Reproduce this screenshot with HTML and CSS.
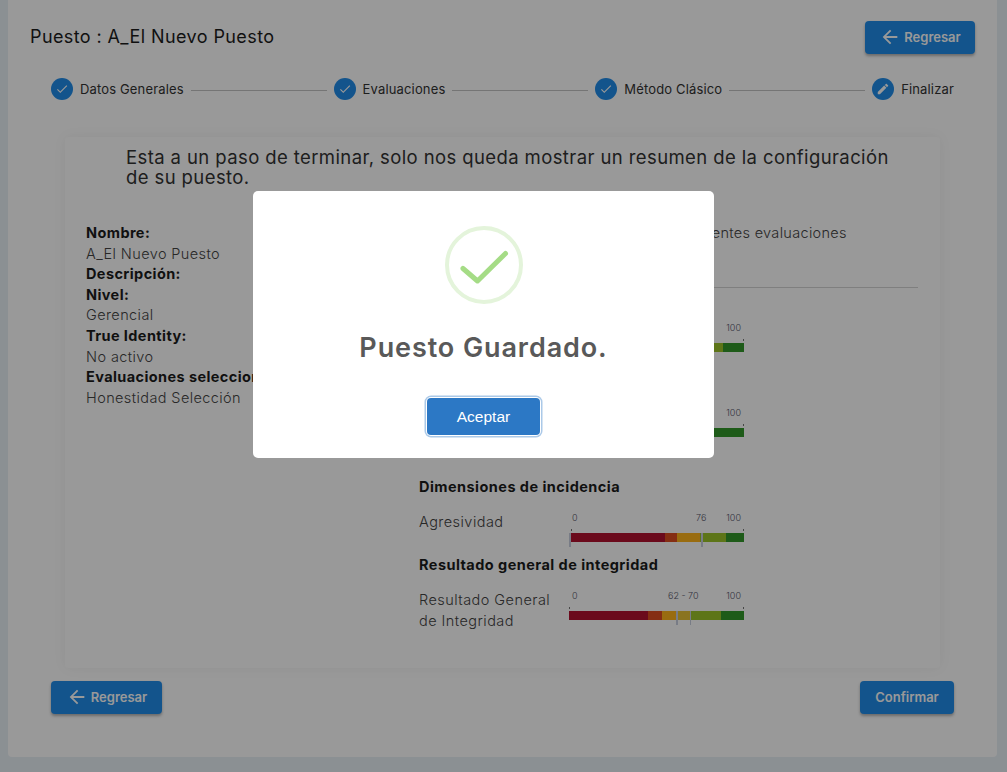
FILE: index.html

```html
<!DOCTYPE html>
<html lang="es">
<head>
  <meta charset="UTF-8" />
  <title>Puesto</title>
  <link rel="stylesheet" href="styles.css">
</head>
<body>
  <div class="panel">
    <div class="header">
      <h1>Puesto : A_El Nuevo Puesto</h1>
      <button class="btn btn-back">
        <svg viewBox="0 0 24 24"><path d="M20 11H7.83l5.59-5.59L12 4l-8 8 8 8 1.41-1.41L7.83 13H20v-2z"/></svg>
        Regresar
      </button>
    </div>

    <div class="steps">
      <span class="step-icon"><svg viewBox="0 0 24 24"><path d="M9 16.17L4.83 12l-1.42 1.41L9 19 21 7l-1.41-1.41z"/></svg></span>
      <span class="step-label">Datos Generales</span>
      <span class="step-line"></span>
      <span class="step-icon"><svg viewBox="0 0 24 24"><path d="M9 16.17L4.83 12l-1.42 1.41L9 19 21 7l-1.41-1.41z"/></svg></span>
      <span class="step-label">Evaluaciones</span>
      <span class="step-line"></span>
      <span class="step-icon"><svg viewBox="0 0 24 24"><path d="M9 16.17L4.83 12l-1.42 1.41L9 19 21 7l-1.41-1.41z"/></svg></span>
      <span class="step-label">Método Clásico</span>
      <span class="step-line"></span>
      <span class="step-icon"><svg viewBox="0 0 24 24"><path d="M20.71 7.04c.39-.39.39-1.04 0-1.41l-2.34-2.34c-.37-.39-1.02-.39-1.41 0l-1.84 1.83 3.75 3.75M3 17.25V21h3.75L17.81 9.93l-3.75-3.75L3 17.25z"/></svg></span>
      <span class="step-label">Finalizar</span>
    </div>

    <div class="card">
      <p class="intro">Esta a un paso de terminar, solo nos queda mostrar un resumen de la configuración de su puesto.</p>
      <div class="columns">
        <div class="summary">
          <b>Nombre:</b>
          <span>A_El Nuevo Puesto</span>
          <b>Descripción:</b>
          <b>Nivel:</b>
          <span>Gerencial</span>
          <b>True Identity:</b>
          <span>No activo</span>
          <b>Evaluaciones seleccionadas:</b>
          <span>Honestidad Selección</span>
        </div>
        <div class="results">
          <div class="results-title">Su puesto será medido mediante las siguientes evaluaciones</div>
          <div class="results-name"></div>

          <div class="row row-first">
            <div class="row-label"></div>
            <div class="gauge">
              <div class="ticks ticks-end"><span>100</span></div>
              <div class="bar">
                <i class="c1 w52"></i><i class="c2 w8"></i><i class="c3 w14"></i><i class="c5 w14"></i><i class="c6 w12"></i>
              </div>
            </div>
          </div>

          <div class="row row-second">
            <div class="row-label"></div>
            <div class="gauge">
              <div class="ticks ticks-end"><span>100</span></div>
              <div class="bar">
                <i class="c1 w52"></i><i class="c2 w8"></i><i class="c3 w14"></i><i class="c5 w8"></i><i class="c6 w18"></i>
              </div>
            </div>
          </div>

          <h3>Dimensiones de incidencia</h3>
          <div class="row">
            <div class="row-label">Agresividad</div>
            <div class="gauge">
              <div class="ticks"><span>0</span><span class="tick-mid tick-76">76</span><span>100</span></div>
              <div class="bar bar-short">
                <i class="c1 w54"></i><i class="c2 w7"></i><i class="c3 w13"></i><i class="c5 w15"></i><i class="c6 w11"></i>
                <em class="mark mark-0"></em><em class="mark mark-76"></em>
              </div>
            </div>
          </div>

          <h3>Resultado general de integridad</h3>
          <div class="row">
            <div class="row-label">Resultado General<br>de Integridad</div>
            <div class="gauge">
              <div class="ticks"><span>0</span><span class="tick-mid tick-range">62 - 70</span><span>100</span></div>
              <div class="bar">
                <i class="c1 w45"></i><i class="c2 w8"></i><i class="c3 w8"></i><i class="c4 w9"></i><i class="c5 w17"></i><i class="c6 w13"></i>
                <em class="mark mark-62"></em><em class="mark mark-70"></em>
              </div>
            </div>
          </div>
        </div>
      </div>
    </div>

    <div class="footer">
      <button class="btn btn-back btn-back-footer">
        <svg viewBox="0 0 24 24"><path d="M20 11H7.83l5.59-5.59L12 4l-8 8 8 8 1.41-1.41L7.83 13H20v-2z"/></svg>
        Regresar
      </button>
      <button class="btn btn-confirm">Confirmar</button>
    </div>
  </div>

  <div class="overlay">
    <div class="modal">
      <svg class="modal-icon" viewBox="0 0 78 78">
        <circle cx="39" cy="39" r="37" fill="none" stroke="#e4f4db" stroke-width="4"/>
        <path d="M18 42.5 L32.5 55 L60.5 27.5" fill="none" stroke="#a5dc86" stroke-width="5" stroke-linecap="round" stroke-linejoin="round"/>
      </svg>
      <h2>Puesto Guardado.</h2>
      <button class="modal-ok">Aceptar</button>
    </div>
  </div>
</body>
</html>
```

FILE: styles.css

```css
* {
  box-sizing: border-box;
}
html, body {
  height: 100%;
}
body {
  font-family: Inter, 'Open Sans', sans-serif;
  background: #e8f0f6;
  color: #222;
  margin: 0;
  padding: 0 10px 15px 8px;
  overflow: hidden;
}
.panel {
  height: 757px;
  background: #fff;
  border-radius: 0 0 4px 4px;
}
.header {
  display: flex;
  justify-content: space-between;
  align-items: center;
  padding: 21px 22px 0;
}
h1 {
  margin: 0 0 2px;
  font-size: 18px;
  font-weight: 400;
  letter-spacing: 0.4px;
  color: #1c1c1c;
}
.btn {
  display: flex;
  align-items: center;
  justify-content: center;
  height: 33px;
  padding: 0 0 2px;
  border: none;
  border-radius: 4px;
  background: #208ce9;
  color: #fff;
  font-family: inherit;
  font-size: 13px;
  font-weight: 600;
  box-shadow: 0 2px 3px rgba(0, 0, 0, 0.3);
}
.btn svg {
  width: 22px;
  height: 22px;
  margin-right: 3px;
  fill: #fff;
}
.btn-back {
  width: 110px;
}
.btn-back-footer {
  width: 111px;
}
.btn-confirm {
  width: 94px;
}
.steps {
  display: flex;
  align-items: center;
  height: 22px;
  padding: 0 43px;
  margin-top: 24px;
}
.step-icon {
  display: flex;
  align-items: center;
  justify-content: center;
  flex: none;
  width: 22px;
  height: 22px;
  border-radius: 50%;
  background: #208ce9;
}
.step-icon svg {
  width: 14px;
  height: 14px;
  fill: #fff;
}
.step-label {
  margin-left: 7px;
  font-size: 13px;
  letter-spacing: 0.15px;
  color: #333;
  white-space: nowrap;
}
.step-line {
  flex: 1;
  height: 1px;
  margin: 2px 7px 0;
  background: #c4c4c4;
}
.card {
  height: 531px;
  margin: 37px 57px 0;
  padding: 10px 22px 0 21px;
  box-shadow: 0 0 14px rgba(0, 0, 0, 0.05);
  border-radius: 4px;
}
.intro {
  width: 775px;
  margin: 0 0 0 40px;
  font-size: 18.5px;
  line-height: 20px;
  letter-spacing: 0.4px;
  color: #333;
}
.columns {
  display: grid;
  grid-template-columns: 333px 1fr;
  margin-top: 36px;
}
.summary {
  display: flex;
  flex-direction: column;
  font-size: 14.5px;
  line-height: 20.6px;
  letter-spacing: 0.4px;
}
.summary b {
  font-weight: 700;
  color: #1c1c1c;
  white-space: nowrap;
}
.summary span {
  font-weight: 300;
  color: #444;
}
.results {
  font-size: 14.5px;
  font-weight: 300;
  letter-spacing: 0.45px;
  color: #444;
}
.results-title {
  line-height: 20.6px;
  letter-spacing: 0.31px;
}
.results-name {
  height: 44px;
  border-bottom: 1px solid #d4d4d4;
}
h3 {
  margin: 0;
  font-size: 14.5px;
  line-height: 20px;
  font-weight: 700;
  color: #1c1c1c;
}
.row {
  display: grid;
  grid-template-columns: 150px 175px;
  margin-top: 14px;
  line-height: 21px;
}
.row-first {
  margin-top: 33px;
  height: 85px;
}
.row-second {
  height: 58px;
  margin-top: 0;
}
.row + h3 {
  margin-top: 13px;
}
.ticks {
  display: flex;
  justify-content: space-between;
  height: 22px;
  padding: 1px 3px 0;
  font-size: 9px;
  line-height: 11px;
  letter-spacing: 0;
  color: #55556a;
  position: relative;
}
.ticks-end {
  justify-content: flex-end;
}
.tick-mid {
  position: absolute;
}
.tick-76 {
  left: 127px;
}
.tick-range {
  left: 99px;
}
.bar {
  display: flex;
  position: relative;
  height: 9px;
}
.bar::before,
.bar::after {
  content: "";
  position: absolute;
  top: -4px;
  width: 1px;
  height: 2px;
  background: #777;
}
.bar::before {
  left: 0;
}
.bar::after {
  right: 0;
}
.bar-short {
  margin-left: 2px;
}
.bar i {
  display: block;
  height: 100%;
}
.c1 { background: #b2112f; }
.c2 { background: #de4d21; }
.c3 { background: #ffb41b; }
.c4 { background: #e6c136; }
.c5 { background: #9bc328; }
.c6 { background: #32982b; }
.w7 { width: 7%; }
.w8 { width: 8%; }
.w9 { width: 8.5%; }
.w11 { width: 10.5%; }
.w12 { width: 12%; }
.w13 { width: 13.2%; }
.w14 { width: 14%; }
.w15 { width: 15%; }
.w17 { width: 17%; }
.w18 { width: 18%; }
.w45 { width: 45.3%; }
.w52 { width: 52%; }
.w54 { width: 54.3%; }
.mark {
  position: absolute;
  top: 0;
  width: 2px;
  height: 14px;
  background: #c8cfe0;
}
.mark-0 { left: -2px; }
.mark-76 { left: 130px; }
.mark-62 { left: 107px; }
.mark-70 { left: 121px; width: 1px; }
.footer {
  display: flex;
  justify-content: space-between;
  padding: 0 43px;
  margin-top: 13px;
}
.overlay {
  position: fixed;
  inset: 0;
  display: flex;
  align-items: flex-start;
  justify-content: center;
  padding: 191px 40px 0 0;
  background: rgba(0, 0, 0, 0.4);
}
.modal {
  display: flex;
  flex-direction: column;
  align-items: center;
  width: 461px;
  height: 267px;
  padding-top: 35px;
  background: #fff;
  border-radius: 5px;
}
.modal-icon {
  width: 78px;
  height: 78px;
}
h2 {
  margin: 26px 0 0;
  font-size: 27px;
  line-height: 36px;
  font-weight: 600;
  letter-spacing: 0.9px;
  color: #595959;
}
.modal-ok {
  width: 113px;
  height: 37px;
  margin-top: 32px;
  border: none;
  border-radius: 4px;
  background: #2c78c5;
  color: #fff;
  font-family: 'Liberation Sans', sans-serif;
  font-size: 15.5px;
  box-shadow: 0 0 0 1px #fff, 0 0 0 2.5px rgba(44, 120, 197, 0.4);
}
```
